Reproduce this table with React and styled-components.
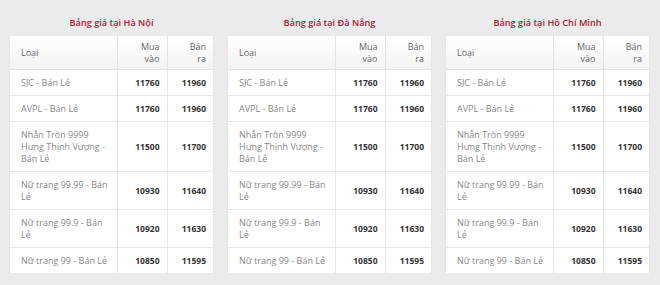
import React from 'react'
import styled, { createGlobalStyle } from 'styled-components'

const Global = createGlobalStyle`
  body{
    margin: 0;
    background: #ebebeb;
    font-family: 'Open Sans', 'Noto Sans', sans-serif;
  }
`

const rows = [
  { name: 'SJC - Bán Lẻ', buy: '11760', sell: '11960' },
  { name: 'AVPL - Bán Lẻ', buy: '11760', sell: '11960' },
  { name: 'Nhẫn Tròn 9999 Hưng Thịnh Vượng - Bán Lẻ', buy: '11500', sell: '11700' },
  { name: 'Nữ trang 99.99 - Bán Lẻ', buy: '10930', sell: '11640' },
  { name: 'Nữ trang 99.9 - Bán Lẻ', buy: '10920', sell: '11630' },
  { name: 'Nữ trang 99 - Bán Lẻ', buy: '10850', sell: '11595' },
]

const cities = ['Hà Nội', 'Đà Nẵng', 'Hồ Chí Minh']

function App() {
  return (
    <>
    <Global />
    <Page>
      {cities.map(city => (
        <Block key={city}>
          <Title>Bảng giá tại {city}</Title>
          <Table>
            <colgroup>
              <col style={{ width: 107 }} />
              <col style={{ width: 50 }} />
              <col style={{ width: 46 }} />
            </colgroup>
            <thead>
              <tr>
                <Th>Loại</Th>
                <Th $num>Mua vào</Th>
                <Th $num>Bán ra</Th>
              </tr>
            </thead>
            <tbody>
              {rows.map(r => (
                <tr key={r.name}>
                  <Td>{r.name}</Td>
                  <Td $num>{r.buy}</Td>
                  <Td $num>{r.sell}</Td>
                </tr>
              ))}
            </tbody>
          </Table>
        </Block>
      ))}
    </Page>
    </>
  )
}

const Page = styled.div`
  display: grid;
  grid-template-columns: repeat(3, 203px);
  column-gap: 15px;
  padding: 0 10px;
`

const Block = styled.div`
  display: flex;
  flex-direction: column;
`

const Title = styled.h3`
  margin: 0;
  padding-top: 16px;
  height: 20px;
  text-align: center;
  font-size: 9.2px;
  line-height: 13px;
  font-weight: 600;
  color: #a3253a;
`

const Table = styled.table`
  width: 203px;
  table-layout: fixed;
  border-collapse: collapse;
  background: #fff;
  box-shadow: 0 1px 2px rgba(0,0,0,0.07);
`

const Th = styled.th`
  padding: ${p => p.$num ? '5px 7px 4px 14px' : '5px 8px 4px 11px'};
  text-align: ${p => p.$num ? 'right' : 'left'};
  font-size: 9px;
  line-height: 12px;
  font-weight: 400;
  color: #666;
  background: linear-gradient(#ffffff, #f3f3f3);
  border-right: 1px solid #e4e4e4;
  border-bottom: 1px solid #e4e4e4;
  height: 24px;
  &:last-child{ border-right: none; }
`

const Td = styled.td`
  padding: ${p => p.$num ? '7px 7px 6px 4px' : '7px 7px 6px 11px'};
  text-align: ${p => p.$num ? 'right' : 'left'};
  font-size: ${p => p.$num ? '8.5px' : '9px'};
  line-height: 12px;
  font-weight: ${p => p.$num ? 700 : 400};
  color: ${p => p.$num ? '#333' : '#888'};
  border-right: 1px solid #e8e8e8;
  border-bottom: 1px solid #e8e8e8;
  &:last-child{ border-right: none; }
  tr:last-child > &{ border-bottom: none; }
`

export default App
